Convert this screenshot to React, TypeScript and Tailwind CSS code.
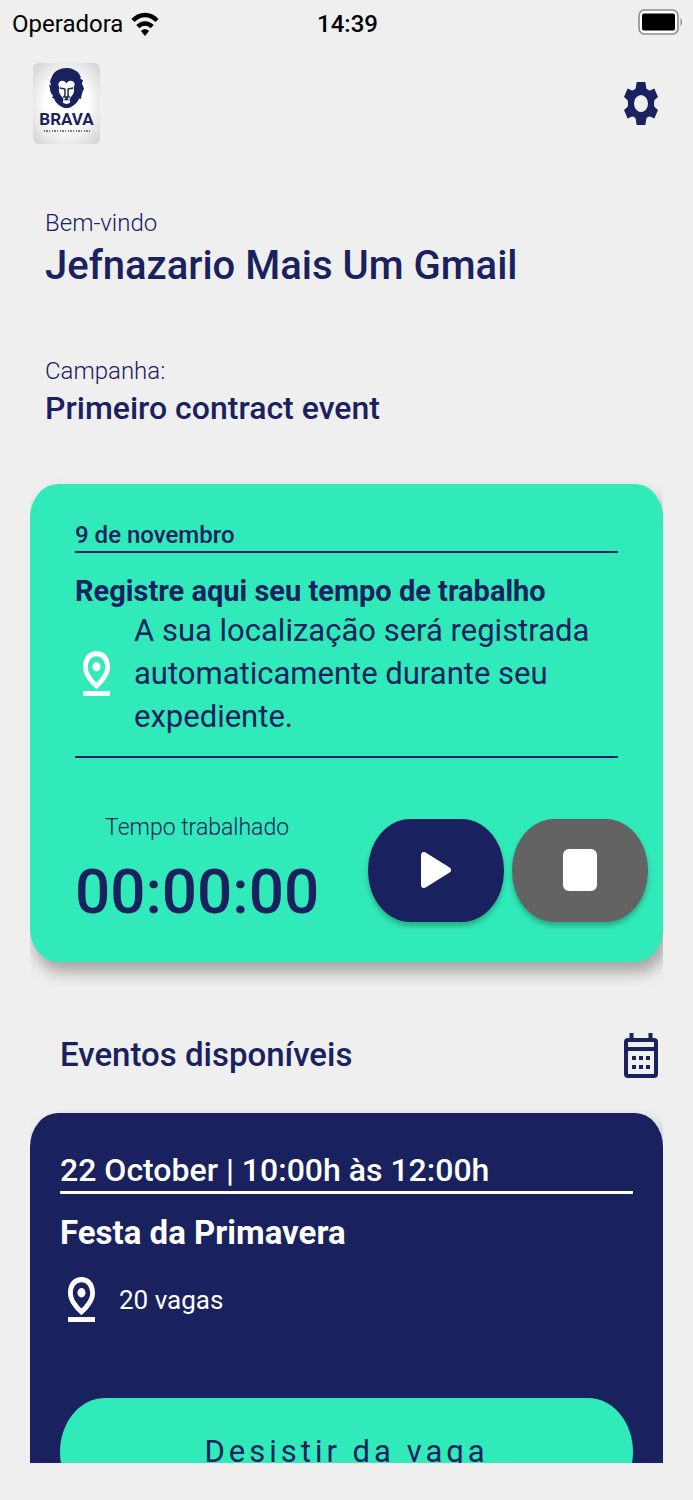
import type { ReactNode } from "react";

const font = "font-[Roboto,'Noto_Sans',sans-serif]";

function WifiIcon() {
  return (
    <svg className="h-6 w-7" viewBox="0 0 28 24" fill="none" stroke="#000" strokeWidth="4.500" aria-hidden="true">
      <path d="M2 8.500C9 1.200 19 1.200 26 8.500" />
      <path d="M6.800 14.700c4.200-4.200 10.200-4.200 14.400 0" />
      <path d="M14 24l-4-5c2-2.200 6-2.200 8 0z" fill="#000" stroke="none" />
    </svg>
  );
}

function BatteryIcon() {
  return (
    <svg className="h-[26px] w-[45px]" viewBox="0 0 45 26" aria-hidden="true">
      <rect x="1" y="1" width="39" height="24" rx="5" ry="6" fill="#fff" stroke="#8d8d8d" strokeWidth="1.600" />
      <rect x="4" y="4.500" width="33" height="17" rx="2" fill="#000" />
      <path d="M42.500 9c2 1.500 2 6.500 0 8z" fill="#8d8d8d" />
    </svg>
  );
}

function GearIcon() {
  return (
    <svg className="h-[43px] w-[34px]" viewBox="0 0 102 130" preserveAspectRatio="none" aria-hidden="true">
      <path
        fill="#19215e"
        fillRule="evenodd"
        d="M38 0h26l3 20q5 7 13 5l11-5 11 25-11 10q-2 10 0 20l11 10-11 25-11-5q-8-2-13 5l-3 20H38l-3-20q-5-7-13-5l-11 5L0 85l11-10q2-10 0-20L0 45l11-25 11 5q8 2 13-5zM51 39a21 26 0 1 0 0 52 21 26 0 0 0 0-52z"
      />
    </svg>
  );
}

function PinIcon() {
  return (
    <svg className="h-[45px] w-[27px] shrink-0" viewBox="5 2 14 20" preserveAspectRatio="none" fill="#fff" aria-hidden="true">
      <path
        fillRule="evenodd"
        d="M12 4.300c2.200 0 4.500 1.700 4.500 4.850 0 2.160-1.500 4.300-4.500 6.900-3-2.600-4.500-4.740-4.500-6.900C7.500 6 9.800 4.300 12 4.300m0-2.300C8.200 2 5 4.460 5 9.150c0 3.120 2.330 6.410 7 9.850 4.670-3.440 7-6.730 7-9.850C19 4.460 15.800 2 12 2z"
      />
      <circle cx="12" cy="9" r="2.100" />
      <path d="M5 19.800h14v2.200H5z" />
    </svg>
  );
}

function CalendarIcon() {
  return (
    <svg className="h-[45px] w-[34px]" viewBox="0 0 34 45" fill="#19215e" aria-hidden="true">
      <path d="M5.500 0h4v6h-4zM24.500 0h4v6h-4z" />
      <rect x="2" y="7" width="30" height="36" rx="2" fill="none" stroke="#19215e" strokeWidth="4" />
      <path d="M2 14h30v4H2zM8 23h4v4H8zM15 23h4v4h-4zM22 23h4v4h-4zM8 32h4v4H8zM15 32h4v4h-4zM22 32h4v4h-4z" />
    </svg>
  );
}

function BravaLogo() {
  return (
    <div className="flex h-[81px] w-[67px] flex-col items-center rounded-md bg-[radial-gradient(ellipse,#ffffff_45%,#cfcfcf_100%)] pt-[5px] text-[#19215e]">
      <svg className="h-10 w-[35px]" viewBox="0 0 34 39" preserveAspectRatio="none" aria-hidden="true">
        <path
          fill="#19215e"
          d="M17 0c5 0 9 2 12 5l2 4-1 1 3 2-1 3 2 5-2 5-1 5-2 0c-1 3-3 5-6 7-4 3-8 3-12 0-3-2-5-4-6-7l-2-1 1-2c-2-2-3-4-3-7l-1-4 2 1-1-4 2-5C5 3 11 0 17 0z"
        />
        <path
          fill="#fff"
          d="M13 12.500c2 0 3 1 4 2.500 1-1.500 2-2.500 4-2.500 2 0 4 1.500 4 3.500l-1 3c1 3 0 5-1 7l-3 4 .5 4c-2 1.500-5 1.500-7 0l.5-4-3-4c-1-2-2-4-1-7l-1-3c0-2 2-3.500 4-3.500z"
        />
        <path
          fill="none"
          stroke="#19215e"
          strokeWidth="1.400"
          d="M10.500 19.500l5 1v6l-1.500 2.500M23.500 19.500l-5 1v6l1.500 2.500"
        />
        <path fill="#19215e" d="M14.500 27.500h5L18 30l2 1.500h-6l2-1.500z" />
      </svg>
      <span className="text-[17px] leading-[22px] font-bold">BRAVA</span>
      <svg className="h-[2px] w-[46px] opacity-60" viewBox="0 0 46 2" aria-hidden="true">
        <path d="M0 1h46" stroke="#19215e" strokeWidth="2" strokeDasharray="1 1 2 1 1 2" />
      </svg>
    </div>
  );
}

function RoundButton({ label, className, children }: { label: string; className: string; children: ReactNode }) {
  return (
    <button
      type="button"
      aria-label={label}
      className={`flex h-[103px] w-[136px] items-center justify-center rounded-[42px/51px] shadow-[0_4px_5px_rgba(0,0,0,0.25)] ${className}`}
    >
      {children}
    </button>
  );
}

export default function App() {
  return (
    <div className={`flex h-screen flex-col overflow-hidden bg-[#efefef] pb-[37px] text-[#19215e] ${font}`}>
      {/* Status bar */}
      <div className="grid h-12 shrink-0 grid-cols-3 items-center pr-[10px] pl-3 text-2xl text-black">
        <div className="flex items-center gap-2">
          <span>Operadora</span>
          <WifiIcon />
        </div>
        <span className="text-center font-medium">14:39</span>
        <div className="flex justify-end pb-1">
          <BatteryIcon />
        </div>
      </div>

      {/* Header */}
      <header className="flex shrink-0 items-center justify-between pt-[15px] pr-[35px] pl-[33px]">
        <BravaLogo />
        <button type="button" aria-label="Configurações">
          <GearIcon />
        </button>
      </header>

      {/* Content */}
      <main className="mx-[30px] min-h-0 flex-1 overflow-hidden">
        <section className="px-[15px] pt-[63px]">
          <p className="text-2xl leading-8 font-light">Bem-vindo</p>
          <h1 className="text-[40px] leading-[54px] font-medium">Jefnazario Mais Um Gmail</h1>
          <p className="mt-[62px] text-2xl leading-8 font-light">Campanha:</p>
          <h2 className="text-[32px] leading-[42px] font-medium">Primeiro contract event</h2>
        </section>

        <section className="mt-[55px] rounded-[28px/34px] bg-[#31eab9] pb-[34px] shadow-[4px_10px_16px_rgba(0,0,0,0.32)]">
          <div className="mx-[45px] pt-[35px]">
            <p className="border-b-2 text-2xl leading-8 font-medium">9 de novembro</p>
            <h3 className="mt-5 text-[29px] leading-9 font-bold">Registre aqui seu tempo de trabalho</h3>
            <div className="flex items-center gap-6 border-b-2 pb-[18px] pl-2">
              <PinIcon />
              <p className="text-[31px] leading-[43px]">A sua localização será registrada automaticamente durante seu expediente.</p>
            </div>
          </div>
          <div className="mt-[54px] flex items-center justify-between pr-[15px] pl-[45px]">
            <div className="text-center">
              <p className="text-[23px] leading-8 font-light">Tempo trabalhado</p>
              <p className="mt-3 text-[62px] leading-[72px] font-medium">00:00:00</p>
            </div>
            <div className="flex gap-2">
              <RoundButton label="Iniciar" className="bg-[#19215e]">
                <svg className="h-9 w-[30px]" viewBox="0 0 30 36" aria-hidden="true">
                  <path d="M3 3v30L27 18z" fill="#fff" stroke="#fff" strokeWidth="6" strokeLinejoin="round" />
                </svg>
              </RoundButton>
              <RoundButton label="Parar" className="bg-[#636363]">
                <span className="h-[42px] w-[34px] rounded-md bg-white" />
              </RoundButton>
            </div>
          </div>
        </section>

        <div className="mt-[70px] flex items-center justify-between pr-[5px] pl-[30px]">
          <h2 className="text-[33px] leading-[46px] font-medium">Eventos disponíveis</h2>
          <button type="button" aria-label="Calendário">
            <CalendarIcon />
          </button>
        </div>

        <section className="mt-[35px] rounded-[28px/34px] bg-[#19215e] px-[30px] pt-9 pb-10 text-white shadow-[4px_10px_16px_rgba(0,0,0,0.32)]">
          <p className="border-b-3 text-[32px] leading-[42px] font-medium">22 October | 10:00h às 12:00h</p>
          <h3 className="mt-[18px] text-[33px] leading-[42px] font-bold">Festa da Primavera</h3>
          <div className="mt-[23px] flex items-center gap-6 pl-2">
            <PinIcon />
            <p className="text-[26px] leading-9">20 vagas</p>
          </div>
          <button
            type="button"
            className="mt-[76px] h-[108px] w-full rounded-[45px/54px] bg-[#31eab9] text-[31px] tracking-[4px] text-[#19215e]"
          >
            Desistir da vaga
          </button>
        </section>
      </main>
    </div>
  );
}
